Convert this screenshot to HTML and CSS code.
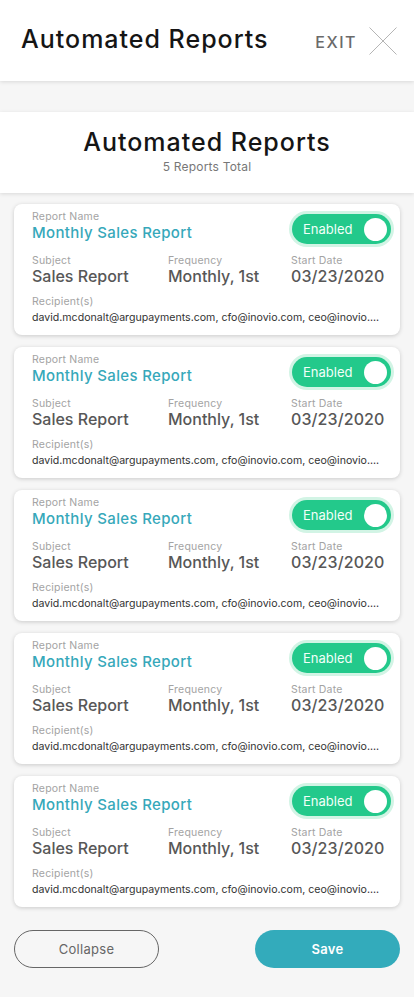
FILE: index.html
```html
<!DOCTYPE html>
<html lang="en">
<head>
<meta charset="utf-8">
<title>Automated Reports</title>
<link rel="stylesheet" href="styles.css">
</head>
<body>
<header class="topbar">
  <h1 class="topbar-title">Automated Reports</h1>
  <button class="exit">
    <span class="exit-label">EXIT</span>
    <svg class="exit-icon" width="28" height="28" viewBox="0 0 28 28" aria-hidden="true">
      <path d="M0.5 0.5 L27.5 27.5 M27.5 0.5 L0.5 27.5" stroke="#b5b5b5" stroke-width="1" fill="none"/>
    </svg>
  </button>
</header>

<section class="summary">
  <h2 class="summary-title">Automated Reports</h2>
  <p class="summary-sub">5 Reports Total</p>
</section>

<main class="cards">
  <article class="card">
    <div class="card-head">
      <div>
        <div class="label">Report Name</div>
        <div class="name">Monthly Sales Report</div>
      </div>
      <div class="toggle"><span class="toggle-text">Enabled</span><span class="knob"></span></div>
    </div>
    <div class="fields">
      <div><div class="label">Subject</div><div class="value">Sales Report</div></div>
      <div><div class="label">Frequency</div><div class="value">Monthly, 1st</div></div>
      <div><div class="label">Start Date</div><div class="value num">03/23/2020</div></div>
    </div>
    <div class="label rec-label">Recipient(s)</div>
    <div class="emails">david.mcdonalt@argupayments.com, cfo@inovio.com, ceo@inovio....</div>
  </article>
  <article class="card">
    <div class="card-head">
      <div>
        <div class="label">Report Name</div>
        <div class="name">Monthly Sales Report</div>
      </div>
      <div class="toggle"><span class="toggle-text">Enabled</span><span class="knob"></span></div>
    </div>
    <div class="fields">
      <div><div class="label">Subject</div><div class="value">Sales Report</div></div>
      <div><div class="label">Frequency</div><div class="value">Monthly, 1st</div></div>
      <div><div class="label">Start Date</div><div class="value num">03/23/2020</div></div>
    </div>
    <div class="label rec-label">Recipient(s)</div>
    <div class="emails">david.mcdonalt@argupayments.com, cfo@inovio.com, ceo@inovio....</div>
  </article>
  <article class="card">
    <div class="card-head">
      <div>
        <div class="label">Report Name</div>
        <div class="name">Monthly Sales Report</div>
      </div>
      <div class="toggle"><span class="toggle-text">Enabled</span><span class="knob"></span></div>
    </div>
    <div class="fields">
      <div><div class="label">Subject</div><div class="value">Sales Report</div></div>
      <div><div class="label">Frequency</div><div class="value">Monthly, 1st</div></div>
      <div><div class="label">Start Date</div><div class="value num">03/23/2020</div></div>
    </div>
    <div class="label rec-label">Recipient(s)</div>
    <div class="emails">david.mcdonalt@argupayments.com, cfo@inovio.com, ceo@inovio....</div>
  </article>
  <article class="card">
    <div class="card-head">
      <div>
        <div class="label">Report Name</div>
        <div class="name">Monthly Sales Report</div>
      </div>
      <div class="toggle"><span class="toggle-text">Enabled</span><span class="knob"></span></div>
    </div>
    <div class="fields">
      <div><div class="label">Subject</div><div class="value">Sales Report</div></div>
      <div><div class="label">Frequency</div><div class="value">Monthly, 1st</div></div>
      <div><div class="label">Start Date</div><div class="value num">03/23/2020</div></div>
    </div>
    <div class="label rec-label">Recipient(s)</div>
    <div class="emails">david.mcdonalt@argupayments.com, cfo@inovio.com, ceo@inovio....</div>
  </article>
  <article class="card">
    <div class="card-head">
      <div>
        <div class="label">Report Name</div>
        <div class="name">Monthly Sales Report</div>
      </div>
      <div class="toggle"><span class="toggle-text">Enabled</span><span class="knob"></span></div>
    </div>
    <div class="fields">
      <div><div class="label">Subject</div><div class="value">Sales Report</div></div>
      <div><div class="label">Frequency</div><div class="value">Monthly, 1st</div></div>
      <div><div class="label">Start Date</div><div class="value num">03/23/2020</div></div>
    </div>
    <div class="label rec-label">Recipient(s)</div>
    <div class="emails">david.mcdonalt@argupayments.com, cfo@inovio.com, ceo@inovio....</div>
  </article>
</main>

<footer class="actions">
  <button class="btn btn-outline">Collapse</button>
  <button class="btn btn-primary">Save</button>
</footer>
</body>
</html>
```

FILE: styles.css
```css
* { box-sizing: border-box; }
html, body { margin: 0; padding: 0; }
body {
  background: #f6f6f6;
  font-family: Inter, "Noto Sans", sans-serif;
  color: #222;
  width: 414px;
  min-height: 997px;
}
button { font-family: inherit; }

.topbar {
  height: 81px;
  background: #fff;
  box-shadow: 0 1px 4px rgba(0,0,0,0.12);
  display: flex;
  align-items: center;
  justify-content: space-between;
  padding: 0 17px 0 21px;
  position: relative;
  z-index: 2;
}
.topbar-title {
  margin: 0;
  font-size: 25px;
  font-weight: 500;
  letter-spacing: 1px;
  color: #151515;
  line-height: 30px;
  margin-top: -3px;
}
.exit {
  display: flex;
  align-items: center;
  gap: 12px;
  background: none;
  border: 0;
  padding: 0;
}
.exit-label {
  font-size: 16px;
  letter-spacing: 1.5px;
  color: #6a6a6a;
  font-weight: 500;
  margin-top: 3px;
}
.exit-icon { display: block; }

.summary {
  margin-top: 31px;
  height: 81px;
  background: #fff;
  box-shadow: 0 1px 4px rgba(0,0,0,0.12);
  text-align: center;
  padding-top: 15px;
}
.summary-title {
  margin: 0;
  font-size: 25px;
  font-weight: 500;
  letter-spacing: 1px;
  line-height: 30px;
  color: #151515;
}
.summary-sub {
  margin: 2px 0 0;
  font-size: 12px;
  line-height: 16px;
  color: #777;
  letter-spacing: 0.2px;
}

.cards {
  display: flex;
  flex-direction: column;
  gap: 12px;
  padding: 11px 14px 0;
}
.card {
  background: #fff;
  border-radius: 8px;
  box-shadow: 0 1px 4px rgba(0,0,0,0.18);
  padding: 6px 18px 8px 18px;
}
.card-head {
  display: flex;
  justify-content: space-between;
  align-items: flex-start;
}
.label {
  font-size: 10.5px;
  line-height: 14px;
  color: #a3a3a3;
  letter-spacing: 0.2px;
}
.name {
  font-size: 15px;
  line-height: 17px;
  font-weight: 500;
  color: #36a8ba;
  letter-spacing: 0.35px;
}
.toggle {
  margin-top: 4px;
  margin-bottom: -3px;
  margin-right: -9px;
  width: 99px;
  height: 30px;
  border-radius: 15px;
  background: #23c98b;
  box-shadow: 0 0 0 3px #d2f4e5;
  display: flex;
  align-items: center;
  justify-content: space-between;
  padding: 0 4px 0 11px;
}
.toggle-text {
  color: #f2fff9;
  font-size: 13px;
}
.knob {
  width: 23px;
  height: 23px;
  border-radius: 50%;
  background: #fff;
}
.fields {
  display: grid;
  grid-template-columns: 136px 123px 1fr;
  margin-top: 13px;
}
.value {
  font-size: 16px;
  line-height: 16px;
  font-weight: 500;
  color: #575757;
  letter-spacing: 0;
}
.value.num { letter-spacing: 0.1px; }
.rec-label { margin-top: 11px; }
.emails {
  font-size: 10.6px;
  line-height: 18px;
  color: #333;
  white-space: nowrap;
}

.actions {
  display: flex;
  justify-content: space-between;
  padding: 23px 14px 29px;
}
.btn {
  width: 145px;
  height: 38px;
  border-radius: 19px;
  font-size: 13px;
  cursor: pointer;
}
.btn-outline {
  background: transparent;
  border: 1px solid #666;
  color: #666;
  letter-spacing: 0.3px;
}
.btn-primary {
  background: #33abbb;
  border: 0;
  color: #fff;
  font-weight: 600;
  letter-spacing: 0.3px;
}
```
